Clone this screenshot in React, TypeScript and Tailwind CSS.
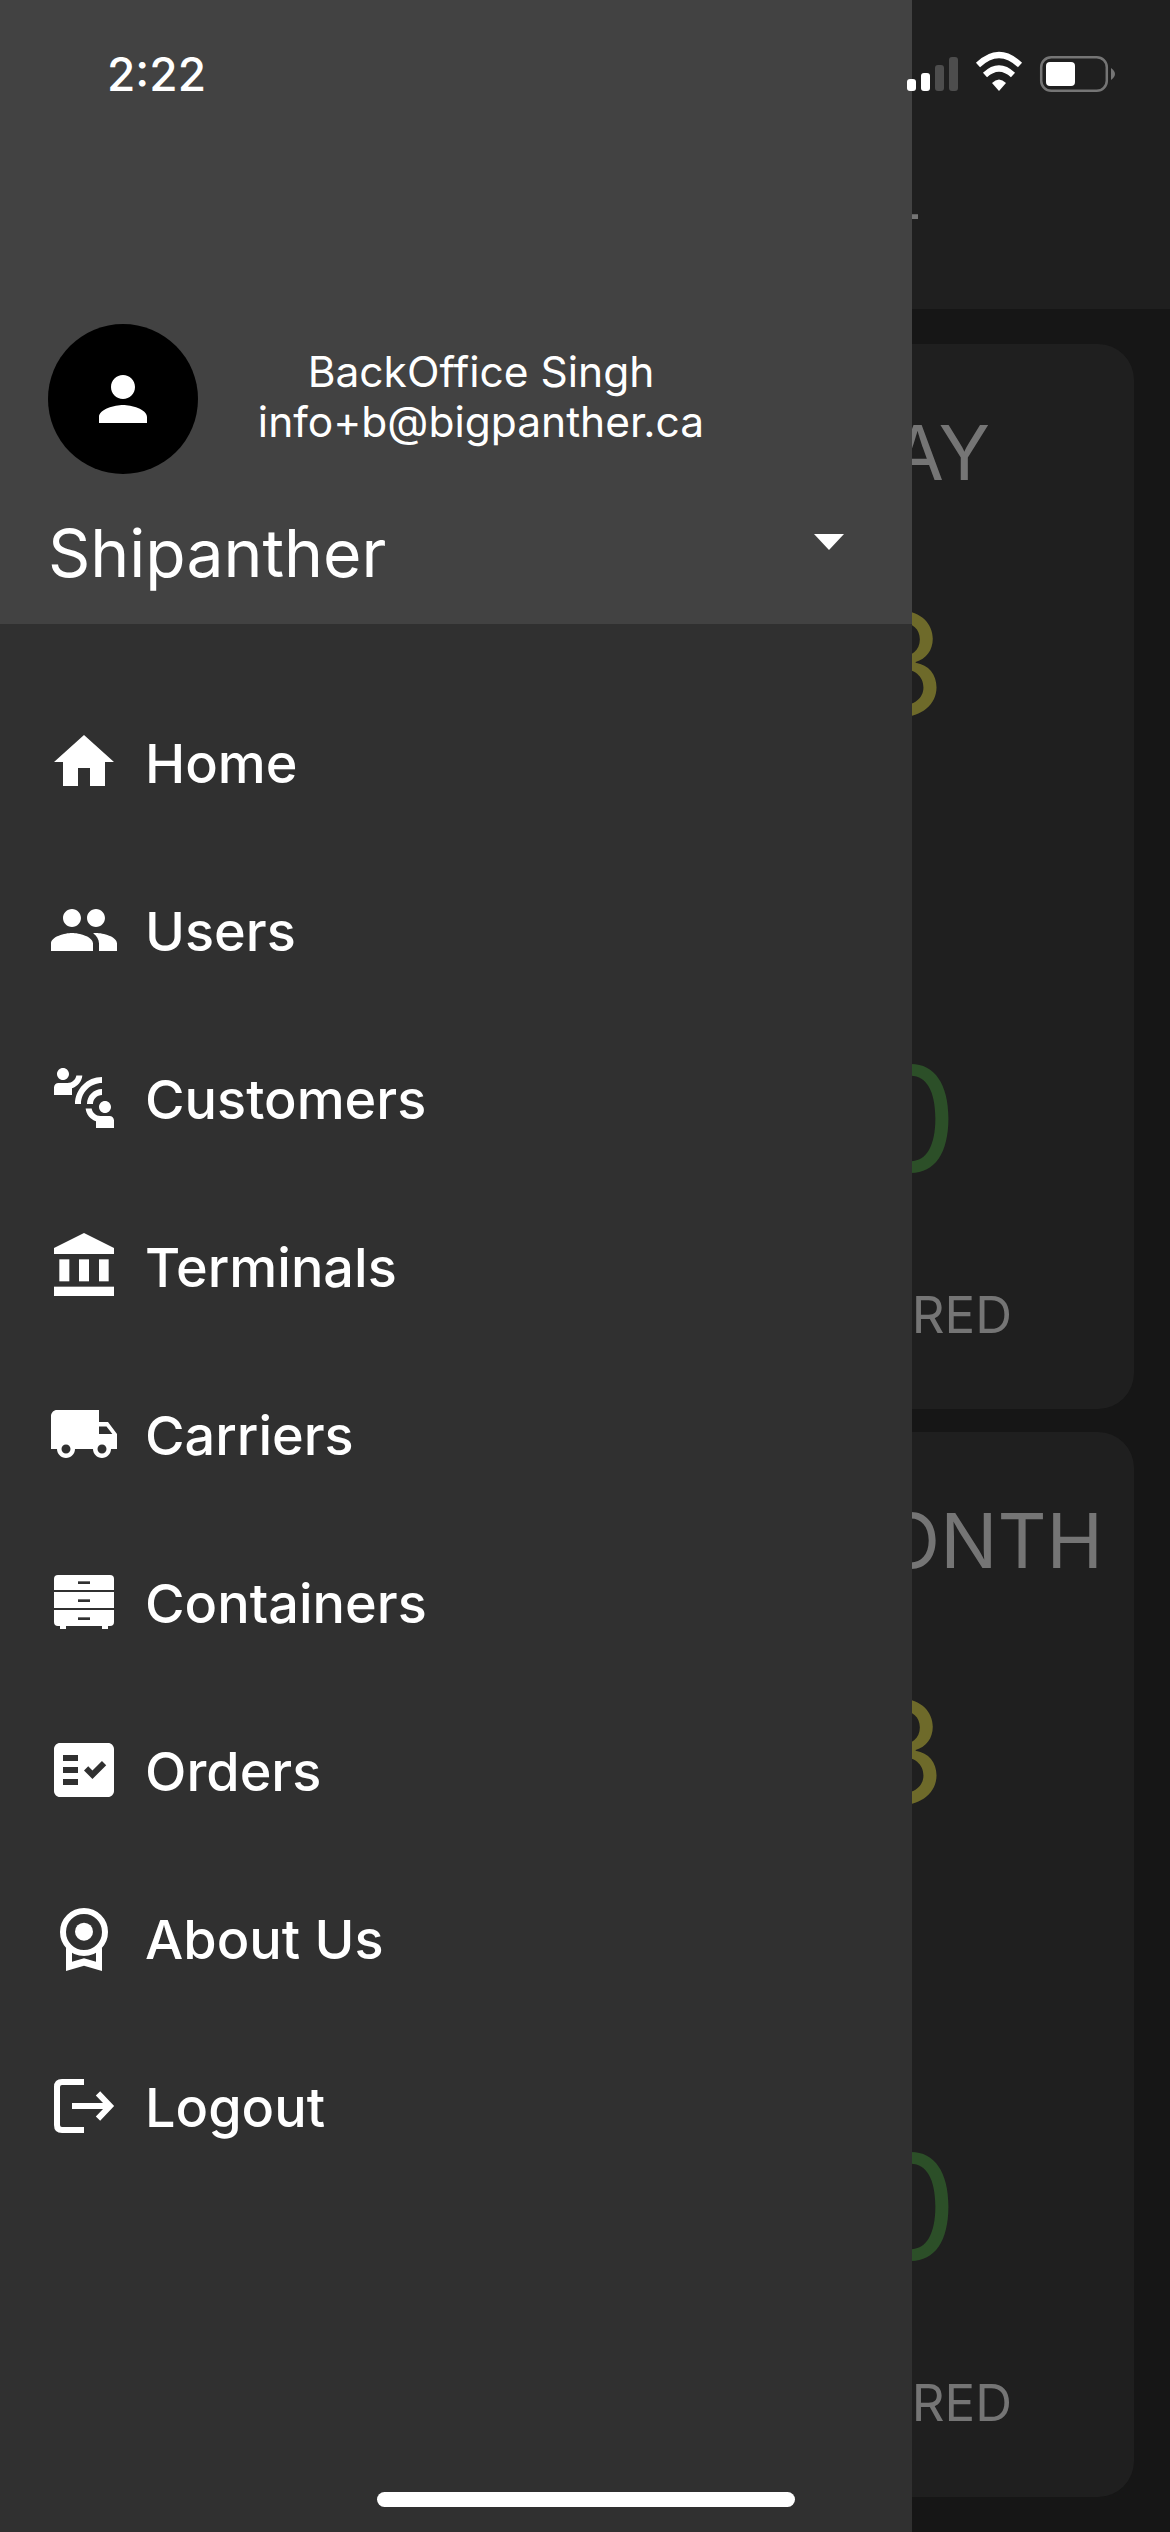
const MENU: { label: string; icon: React.ReactNode }[] = [
  {
    label: 'Home',
    icon: (
      <svg viewBox="0 0 24 24" className="w-[72px] h-[72px] fill-white">
        <path d="M10 20v-6h4v6h5v-8h3L12 3 2 12h3v8z" />
      </svg>
    ),
  },
  {
    label: 'Users',
    icon: (
      <svg viewBox="0 0 24 24" className="w-[72px] h-[72px] fill-white">
        <path d="M16 11c1.66 0 2.99-1.34 2.99-3S17.66 5 16 5c-1.66 0-3 1.34-3 3s1.34 3 3 3zm-8 0c1.66 0 2.99-1.34 2.99-3S9.66 5 8 5C6.34 5 5 6.34 5 8s1.34 3 3 3zm0 2c-2.33 0-7 1.17-7 3.5V19h14v-2.5c0-2.33-4.67-3.5-7-3.5zm8 0c-.29 0-.62.02-.97.05 1.16.84 1.97 1.97 1.97 3.45V19h6v-2.5c0-2.33-4.67-3.5-7-3.5z" />
      </svg>
    ),
  },
  {
    label: 'Customers',
    icon: (
      <svg viewBox="0 0 24 24" className="w-[72px] h-[72px] fill-white">
        <path d="M11 14H9c0-4.97 4.03-9 9-9v2c-3.87 0-7 3.13-7 7zm7-3V9c-2.76 0-5 2.24-5 5h2c0-1.66 1.34-3 3-3zM7 4c0-1.11-.89-2-2-2s-2 .89-2 2 .89 2 2 2 2-.89 2-2zm4.45.5h-2C9.21 5.92 7.99 7 6.5 7h-3C2.67 7 2 7.67 2 8.5V11h6V8.74c1.86-.59 3.25-2.27 3.45-4.24zM19 17c1.11 0 2-.89 2-2s-.89-2-2-2-2 .89-2 2 .89 2 2 2zm1.5 1h-3c-1.49 0-2.71-1.08-2.95-2.5h-2c.2 1.97 1.59 3.65 3.45 4.24V22h6v-2.5c0-.83-.67-1.5-1.5-1.5z" />
      </svg>
    ),
  },
  {
    label: 'Terminals',
    icon: (
      <svg viewBox="-3 3 270 270" className="w-[90px] h-[90px] fill-white">
        <path d="M132 39L222 84V102H42V84Z" />
        <rect x="58" y="118" width="30" height="66" />
        <rect x="117" y="118" width="30" height="66" />
        <rect x="177" y="118" width="29" height="66" />
        <rect x="42" y="200" width="180" height="28" />
      </svg>
    ),
  },
  {
    label: 'Carriers',
    icon: (
      <svg viewBox="0 0 24 24" className="w-[72px] h-[72px] fill-white">
        <path d="M20 8h-3V4H3c-1.1 0-2 .9-2 2v11h2c0 1.66 1.34 3 3 3s3-1.34 3-3h6c0 1.66 1.34 3 3 3s3-1.34 3-3h2v-5l-3-4zM6 18.5c-.83 0-1.5-.67-1.5-1.5s.67-1.5 1.5-1.5 1.5.67 1.5 1.5-.67 1.5-1.5 1.5zm13.5-9l1.96 2.5H17V9.5h2.5zm-1.5 9c-.83 0-1.5-.67-1.5-1.5s.67-1.5 1.5-1.5 1.5.67 1.5 1.5-.67 1.5-1.5 1.5z" />
      </svg>
    ),
  },
  {
    label: 'Containers',
    icon: (
      <svg viewBox="-3 -9 270 270" className="w-[90px] h-[90px] fill-white">
        <path d="M54 45H210Q222 45 222 57V90H42V57Q42 45 54 45Z" />
        <rect x="42" y="96" width="180" height="48" />
        <path d="M42 150H222V186Q222 198 210 198H204V207H186V198H78V207H60V198H54Q42 198 42 186Z" />
        <rect x="114" y="64" width="36" height="8" fill="#303030" />
        <rect x="114" y="118" width="36" height="8" fill="#303030" />
        <rect x="114" y="172" width="36" height="8" fill="#303030" />
      </svg>
    ),
  },
  {
    label: 'Orders',
    icon: (
      <svg viewBox="0 0 24 24" className="w-[72px] h-[72px] fill-white">
        <path
          fillRule="evenodd"
          d="M20 3H4c-1.1 0-2 .9-2 2v14c0 1.1.9 2 2 2h16c1.1 0 2-.9 2-2V5c0-1.1-.9-2-2-2zM10 17H5v-2h5v2zm0-4H5v-2h5v2zm0-4H5V7h5v2zm4.82 6L12 12.16l1.41-1.41 1.41 1.42L17.99 9l1.42 1.42L14.82 15z"
        />
      </svg>
    ),
  },
  {
    label: 'About Us',
    icon: (
      <svg viewBox="-3 -6 270 270" className="w-[90px] h-[90px] fill-white">
        <path
          fillRule="evenodd"
          d="M78 158Q132 190 186 158V228L132 212L78 228ZM96 170H168V200L132 190L96 200Z"
        />
        <circle cx="132" cy="111" r="63" fill="none" stroke="white" strokeWidth="18" />
        <circle cx="132" cy="110" r="27" />
      </svg>
    ),
  },
  {
    label: 'Logout',
    icon: (
      <svg viewBox="-3 3 270 270" className="w-[90px] h-[90px] fill-none stroke-white" strokeWidth="18">
        <path d="M132 66H66Q51 66 51 81V195Q51 210 66 210H132" />
        <path d="M96 138H205" />
        <path d="M174 100L210 138L174 176" />
      </svg>
    ),
  },
];

function StatCard({ title, titleMargin }: { title: string; titleMargin: string }) {
  return (
    <div className="mx-[36px] h-[1065px] rounded-[36px] bg-[#1f1f1f] pt-[68px] flex flex-col items-end whitespace-nowrap">
      <div className={`h-[80px] text-[76px] leading-[80px] text-[#757575] ${titleMargin}`}>{title}</div>
      <div className="mt-[102px] mr-[189px] h-[140px] text-[142px] leading-[140px] text-[#6e6a2a]">3</div>
      <div className="mt-[315px] mr-[177px] h-[140px] text-[146px] leading-[140px] text-[#2c4f28]">0</div>
      <div className="mt-[96px] mr-[122px] h-[60px] text-[51px] leading-[60px] text-[#757575]">DELIVERED</div>
    </div>
  );
}

export default function App() {
  return (
    <div className="relative w-[1170px] h-[2532px] overflow-hidden bg-[#161616] font-[Inter,sans-serif] text-white">
      {/* Dashboard behind the drawer */}
      <div className="h-[309px] bg-[#1f1f1f] pt-[168px] pl-[888px] text-[58px] leading-[60px] text-[#757575]">
        L
      </div>
      <div className="pt-[35px] flex flex-col gap-[23px]">
        <StatCard title="TODAY" titleMargin="mr-[144px]" />
        <StatCard title="THIS MONTH" titleMargin="mr-[31px]" />
      </div>

      {/* Drawer */}
      <div className="absolute inset-y-0 left-0 w-[912px] bg-[#303030]">
        <div className="h-[624px] bg-[#424242] pt-[324px]">
          <div className="flex items-center pl-[48px]">
            <div className="w-[150px] h-[150px] rounded-full bg-black flex items-center justify-center">
              <svg viewBox="0 0 24 24" className="w-[72px] h-[72px] fill-white">
                <path d="M12 12c2.21 0 4-1.79 4-4s-1.79-4-4-4-4 1.79-4 4 1.79 4 4 4zm0 2c-2.67 0-8 1.34-8 4v2h16v-2c0-2.66-5.33-4-8-4z" />
              </svg>
            </div>
            <div className="w-[566px] text-center text-[42.5px] leading-[50px] mb-[5px]">
              <div>BackOffice Singh</div>
              <div>info+b@bigpanther.ca</div>
            </div>
          </div>
          <div className="flex items-center justify-between pl-[48px] pr-[68px] mt-[39px]">
            <div className="text-[66px] leading-[80px]">Shipanther</div>
            <svg viewBox="0 0 30 16" className="w-[30px] h-[16px] fill-white mb-[23px]">
              <path d="M0 0H30L15 16Z" />
            </svg>
          </div>
        </div>
        <div className="pt-[54px] flex flex-col">
          {MENU.map((item) => (
            <div key={item.label} className="h-[168px] flex items-center">
              <div className="w-[90px] ml-[39px] mr-[16px] flex justify-center">{item.icon}</div>
              <span className="text-[54px] font-medium mt-[2px]">{item.label}</span>
            </div>
          ))}
        </div>
      </div>

      {/* Status bar */}
      <div className="absolute top-0 inset-x-0 h-[120px]">
        <div className="absolute left-[107px] top-[45px] text-[46px] leading-[58px] font-medium">2:22</div>
        <svg viewBox="0 0 270 60" className="absolute left-[900px] top-[50px] w-[270px] h-[60px]">
          <rect x="7" y="29" width="9" height="12" rx="3" fill="white" />
          <rect x="21" y="23" width="9" height="18" rx="3" fill="white" />
          <rect x="35" y="15" width="9" height="26" rx="3" fill="#4d4d4d" />
          <rect x="49" y="7" width="9" height="34" rx="3" fill="#4d4d4d" />
          <path d="M78 15Q99-5 120 15" fill="none" stroke="white" strokeWidth="6" />
          <path d="M85 25Q99 12 113 25" fill="none" stroke="white" strokeWidth="6" />
          <path d="M92 33Q99 26 106 33L99 41Z" fill="white" />
          <rect x="141.2" y="7.2" width="65.6" height="33.6" rx="10" fill="none" stroke="#757575" strokeWidth="2.5" />
          <rect x="146" y="12" width="29" height="24" rx="4" fill="white" />
          <path d="M211 18Q215 21 215 24Q215 27 211 30Z" fill="#757575" />
        </svg>
      </div>

      {/* Home indicator */}
      <div className="absolute left-[377px] top-[2492px] w-[418px] h-[15px] rounded-full bg-white" />
    </div>
  );
}
